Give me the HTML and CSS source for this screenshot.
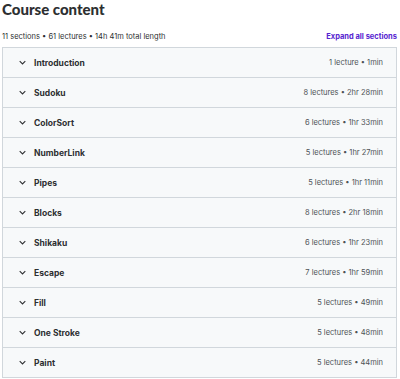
FILE: index.html
```html
<!DOCTYPE html>
<html>
<head>
<meta charset="utf-8">
<link rel="stylesheet" href="styles.css">
</head>
<body>
<div class="wrap">
  <h2 class="title">Course content</h2>
  <div class="meta">
    <span class="summary">11 sections • 61 lectures • 14h 41m total length</span>
    <button class="expand">Expand all sections</button>
  </div>
  <div class="panel">
    <div class="row"><span class="chev"><svg viewBox="0 0 10 6" width="7" height="5"><path d="M1 1l4 4 4-4" fill="none" stroke="#2d2f31" stroke-width="1.5"/></svg></span><span class="name">Introduction</span><span class="info">1 lecture • 1min</span></div>
    <div class="row"><span class="chev"><svg viewBox="0 0 10 6" width="7" height="5"><path d="M1 1l4 4 4-4" fill="none" stroke="#2d2f31" stroke-width="1.5"/></svg></span><span class="name">Sudoku</span><span class="info">8 lectures • 2hr 28min</span></div>
    <div class="row"><span class="chev"><svg viewBox="0 0 10 6" width="7" height="5"><path d="M1 1l4 4 4-4" fill="none" stroke="#2d2f31" stroke-width="1.5"/></svg></span><span class="name">ColorSort</span><span class="info">6 lectures • 1hr 33min</span></div>
    <div class="row"><span class="chev"><svg viewBox="0 0 10 6" width="7" height="5"><path d="M1 1l4 4 4-4" fill="none" stroke="#2d2f31" stroke-width="1.5"/></svg></span><span class="name">NumberLink</span><span class="info">5 lectures • 1hr 27min</span></div>
    <div class="row"><span class="chev"><svg viewBox="0 0 10 6" width="7" height="5"><path d="M1 1l4 4 4-4" fill="none" stroke="#2d2f31" stroke-width="1.5"/></svg></span><span class="name">Pipes</span><span class="info">5 lectures • 1hr 11min</span></div>
    <div class="row"><span class="chev"><svg viewBox="0 0 10 6" width="7" height="5"><path d="M1 1l4 4 4-4" fill="none" stroke="#2d2f31" stroke-width="1.5"/></svg></span><span class="name">Blocks</span><span class="info">8 lectures • 2hr 18min</span></div>
    <div class="row"><span class="chev"><svg viewBox="0 0 10 6" width="7" height="5"><path d="M1 1l4 4 4-4" fill="none" stroke="#2d2f31" stroke-width="1.5"/></svg></span><span class="name">Shikaku</span><span class="info">6 lectures • 1hr 23min</span></div>
    <div class="row"><span class="chev"><svg viewBox="0 0 10 6" width="7" height="5"><path d="M1 1l4 4 4-4" fill="none" stroke="#2d2f31" stroke-width="1.5"/></svg></span><span class="name">Escape</span><span class="info">7 lectures • 1hr 59min</span></div>
    <div class="row"><span class="chev"><svg viewBox="0 0 10 6" width="7" height="5"><path d="M1 1l4 4 4-4" fill="none" stroke="#2d2f31" stroke-width="1.5"/></svg></span><span class="name">Fill</span><span class="info">5 lectures • 49min</span></div>
    <div class="row"><span class="chev"><svg viewBox="0 0 10 6" width="7" height="5"><path d="M1 1l4 4 4-4" fill="none" stroke="#2d2f31" stroke-width="1.5"/></svg></span><span class="name">One Stroke</span><span class="info">5 lectures • 48min</span></div>
    <div class="row"><span class="chev"><svg viewBox="0 0 10 6" width="7" height="5"><path d="M1 1l4 4 4-4" fill="none" stroke="#2d2f31" stroke-width="1.5"/></svg></span><span class="name">Paint</span><span class="info">5 lectures • 44min</span></div>
  </div>
</div>
</body>
</html>
```
FILE: styles.css
```css
* { box-sizing: border-box; }
body {
  margin: 0;
  background: #fff;
  font-family: "Inter", "Liberation Sans", sans-serif;
  color: #2d2f31;
}
.wrap {
  padding: 0 3px 0 2px;
}
.title {
  margin: 0;
  font-family: "Lato", "Liberation Sans", sans-serif;
  font-size: 15px;
  font-weight: 900;
  line-height: 18px;
}
.meta {
  display: flex;
  justify-content: space-between;
  align-items: center;
  margin-top: 11px;
  height: 14px;
  margin-bottom: 4px;
}
.summary {
  font-size: 7.5px;
  color: #2d2f31;
}
.expand {
  border: 0;
  background: none;
  padding: 0;
  font-family: inherit;
  font-size: 7.5px;
  font-weight: 700;
  color: #5624d0;
}
.panel {
  border: 1px solid #d1d7dc;
  border-bottom: 0;
}
.row {
  display: flex;
  align-items: center;
  height: 30px;
  padding: 0 13px 0 16px;
  background: #f7f9fa;
  border-bottom: 1px solid #d1d7dc;
}
.chev {
  display: flex;
  width: 15px;
}
.name {
  font-size: 8.5px;
  font-weight: 700;
  flex: 1;
}
.info {
  font-size: 7.5px;
  color: #4d5256;
}
```
